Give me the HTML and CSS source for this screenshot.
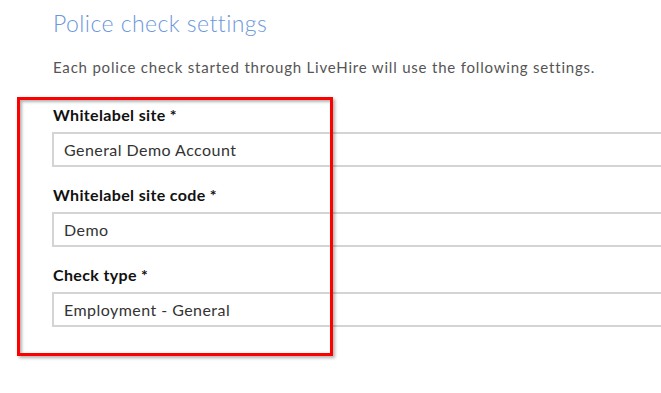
FILE: index.html
```html
<!DOCTYPE html>
<html lang="en">
  <head>
    <meta charset="UTF-8" />
    <title>Police check settings</title>
    <link rel="stylesheet" href="styles.css">
  </head>
  <body>
    <div class="page">
      <h2 class="title">Police check settings</h2>
      <p class="intro">Each police check started through LiveHire will use the following settings.</p>
      <div class="fields">
        <div class="field">
          <label class="field-label">Whitelabel site *</label>
          <div class="field-input">General Demo Account</div>
        </div>
        <div class="field">
          <label class="field-label">Whitelabel site code *</label>
          <div class="field-input">Demo</div>
        </div>
        <div class="field">
          <label class="field-label">Check type *</label>
          <div class="field-input">Employment - General</div>
        </div>
      </div>
    </div>
    <div class="highlight"></div>
  </body>
</html>
```

FILE: styles.css
```css
body {
  margin: 0;
  font-family: Lato, "Open Sans", sans-serif;
  background-color: #ffffff;
  color: #222;
  width: 661px;
  height: 393px;
  overflow: hidden;
  position: relative;
}

.page {
  padding: 10px 0 0 53px;
  width: 700px;
}

.title {
  margin: 0;
  font-size: 23px;
  font-weight: 300;
  color: #6b97dc;
  line-height: 26px;
  letter-spacing: 0.45px;
}

.intro {
  margin: 21px 0 0 0;
  font-size: 15px;
  line-height: 20px;
  color: #555;
  letter-spacing: 0.8px;
}

.fields {
  margin-top: 28px;
}

.field {
  margin-bottom: 18px;
}

.field-label {
  display: block;
  font-size: 16px;
  font-weight: 700;
  line-height: 20px;
  color: #111;
  margin-bottom: 7px;
  letter-spacing: 0.35px;
}

.field-input {
  margin-left: -1px;
  height: 31px;
  line-height: 31px;
  border: 2px solid #d4d4d4;
  padding: 0 10px;
  font-size: 16px;
  color: #333;
  letter-spacing: 0.45px;
}

.highlight {
  position: absolute;
  left: 17px;
  top: 97px;
  width: 310px;
  height: 253px;
  border: 3px solid #ff0000;
  box-shadow: 2px 2px 3px rgba(0, 0, 0, 0.3), inset 2px 2px 3px rgba(0, 0, 0, 0.3);
}
```
